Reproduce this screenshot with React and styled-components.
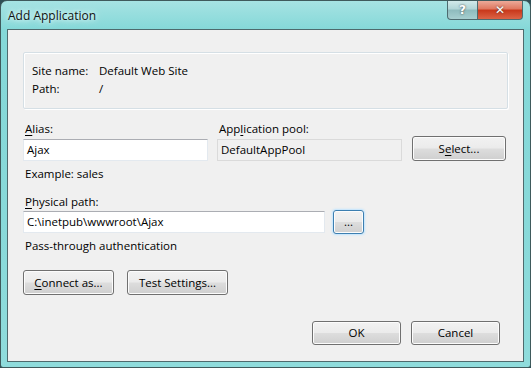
import React from 'react';
import styled, { createGlobalStyle } from 'styled-components';

var GlobalStyle = createGlobalStyle`
  html, body {
    margin: 0;
    padding: 0;
    background: #2f4f55;
  }
  body {
    font-family: "Open Sans", "Noto Sans", sans-serif;
    font-size: 11.5px;
    color: #000;
  }
`;

var Frame = styled.div`
  position: relative;
  width: 531px;
  height: 368px;
  box-sizing: border-box;
  border: 1px solid #3f5a5c;
  border-radius: 7px 7px 3px 3px;
  background: linear-gradient(180deg, #a6e3e3 0%, #84d8d8 8%, #88d9d9 60%, #8fdcdc 100%);
  display: flex;
  flex-direction: column;
  overflow: hidden;
`;

var TitleBar = styled.div`
  height: 28px;
  display: flex;
  align-items: flex-start;
  justify-content: space-between;
  padding-left: 7px;
`;

var Title = styled.div`
  margin-top: 6px;
  font-size: 12px;
  color: #111;
  text-shadow: 0 0 8px #e8ffff, 0 0 4px #e8ffff;
`;

var Controls = styled.div`
  display: flex;
  margin-right: 7px;
  margin-top: -1px;
`;

var CtrlButton = styled.div`
  height: 20px;
  width: ${(p) => p.$w}px;
  box-sizing: border-box;
  border: 1px solid #4d6b6f;
  border-top: none;
  display: flex;
  align-items: center;
  justify-content: center;
  color: #fff;
  font-family: "DejaVu Sans", sans-serif;
  font-weight: bold;
  font-size: 12px;
  text-shadow: 0 0 2px #333;
  background: ${(p) => p.$red
    ? 'linear-gradient(180deg, #eeb0a0 0%, #e07a62 45%, #c9391c 55%, #dc6446 100%)'
    : 'linear-gradient(180deg, #d6ecec 0%, #b3d6d8 45%, #8fbcbe 55%, #a7cfd0 100%)'};
  border-radius: ${(p) => p.$red ? '0 0 4px 0' : '0 0 0 4px'};
  border-left: ${(p) => p.$red ? 'none' : '1px solid #4d6b6f'};
`;

var Client = styled.div`
  margin: 0 6px;
  height: 333px;
  box-sizing: border-box;
  border: 1px solid #4e6a6d;
  background: #f0f0f0;
  padding: 22px 15px 0 15px;
  display: flex;
  flex-direction: column;
`;

var GroupBox = styled.div`
  height: 57px;
  box-sizing: border-box;
  border: 1px solid #d5dfe5;
  box-shadow: inset 1px 1px 0 #fff, 1px 1px 0 #fff;
  border-radius: 2px;
  padding: 1px 0 0 8px;
  display: grid;
  grid-template-columns: 67px 1fr;
  grid-auto-rows: 18px;
  align-content: center;
`;

var Text = styled.div`
  line-height: 16px;
  white-space: nowrap;
`;

var FieldRow = styled.div`
  margin-top: 12px;
  display: grid;
  grid-template-columns: 185px 185px 95px;
  column-gap: 9px;
  align-items: end;
`;

var Field = styled.div`
  display: flex;
  flex-direction: column;
`;

var Label = styled.label`
  line-height: 16px;
  padding-left: 2px;
  margin-bottom: 2px;
  white-space: nowrap;
`;

var Key = styled.span`
  text-decoration: underline;
  text-underline-offset: 2px;
`;

var Input = styled.div`
  height: 22px;
  width: ${(p) => p.$w ? p.$w + 'px' : 'auto'};
  box-sizing: border-box;
  border: 1px solid #e3e9ef;
  border-top-color: #abadb3;
  background: ${(p) => p.$readonly ? '#f0f0f0' : '#fff'};
  ${(p) => p.$readonly && 'border-color: #dadada;'}
  padding: 0 3px;
  line-height: 20px;
  white-space: nowrap;
`;

var Button = styled.div`
  height: ${(p) => p.$h || 25}px;
  width: ${(p) => p.$w}px;
  box-sizing: border-box;
  border: 1px solid ${(p) => p.$focus ? '#3c7fb1' : '#707070'};
  border-radius: 3px;
  background: linear-gradient(180deg, #f2f2f2 0%, #ebebeb 48%, #dddddd 52%, #cfcfcf 100%);
  box-shadow: inset 0 0 0 1px #fcfcfc${(p) => p.$focus ? ', 0 0 2px 1px #bfe4ff' : ''};
  display: flex;
  align-items: center;
  justify-content: center;
  white-space: nowrap;
  line-height: 16px;
  margin-left: ${(p) => p.$ml || 0}px;
`;

var Hint = styled.div`
  line-height: 16px;
  padding-left: 2px;
  margin-top: ${(p) => p.$mt}px;
  white-space: nowrap;
`;

var PathRow = styled.div`
  display: flex;
  align-items: center;
`;

var ButtonRow = styled.div`
  display: flex;
  gap: ${(p) => p.$gap}px;
  margin-top: ${(p) => p.$mt}px;
  justify-content: ${(p) => p.$end ? 'flex-end' : 'flex-start'};
  padding-right: ${(p) => p.$end ? 8 : 0}px;
`;

var App = () => {
  return (
    <>
      <GlobalStyle />
      <Frame>
        <TitleBar>
          <Title>Add Application</Title>
          <Controls>
            <CtrlButton $w={31}>?</CtrlButton>
            <CtrlButton $w={45} $red>✕</CtrlButton>
          </Controls>
        </TitleBar>
        <Client>
          <GroupBox>
            <Text>Site name:</Text>
            <Text>Default Web Site</Text>
            <Text>Path:</Text>
            <Text>/</Text>
          </GroupBox>
          <FieldRow>
            <Field>
              <Label><Key>A</Key>lias:</Label>
              <Input>Ajax</Input>
            </Field>
            <Field>
              <Label>App<Key>l</Key>ication pool:</Label>
              <Input $readonly>DefaultAppPool</Input>
            </Field>
            <Button $ml={1}>S<Key>e</Key>lect...</Button>
          </FieldRow>
          <Hint $mt={5}>Example: sales</Hint>
          <Hint $mt={12}><Key>P</Key>hysical path:</Hint>
          <PathRow>
            <Input $w={302}>C:\inetpub\wwwroot\Ajax</Input>
            <Button $w={31} $h={24} $focus $ml={8}>...</Button>
          </PathRow>
          <Hint $mt={4}>Pass-through authentication</Hint>
          <ButtonRow $mt={16} $gap={13}>
            <Button $w={91}><Key>C</Key>onnect as...</Button>
            <Button $w={101}>Test Settings...</Button>
          </ButtonRow>
          <ButtonRow $mt={26} $gap={10} $end>
            <Button $w={89} $h={24}>OK</Button>
            <Button $w={89} $h={24}>Cancel</Button>
          </ButtonRow>
        </Client>
      </Frame>
    </>
  );
};

export default App;
